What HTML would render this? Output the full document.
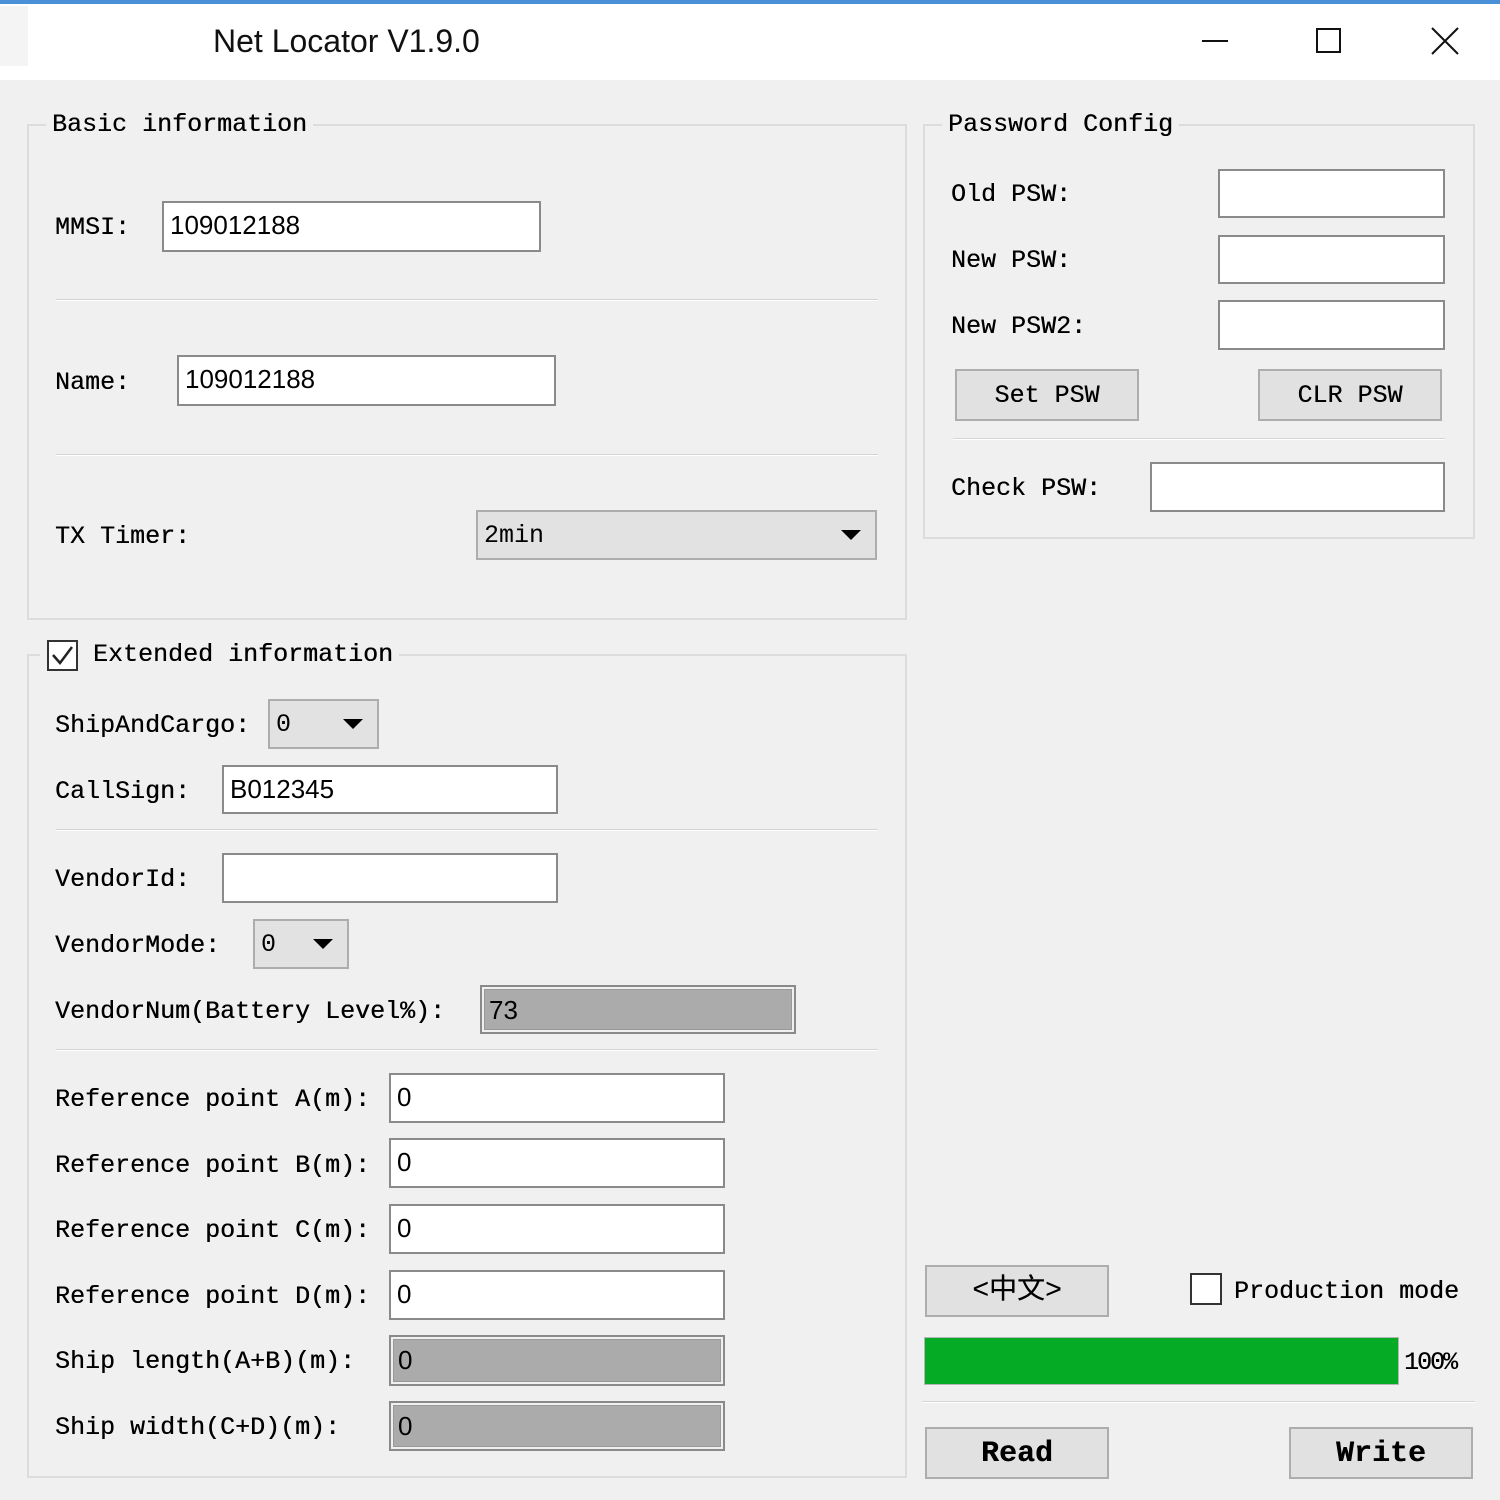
<!DOCTYPE html>
<html><head><meta charset="utf-8"><style>
*{margin:0;padding:0;box-sizing:border-box}
body{width:1500px;height:1500px;background:#f0f0f0;position:relative;overflow:hidden;font-family:"Liberation Mono","Noto Sans CJK SC",monospace;font-size:25px;color:#000}
.a{position:absolute}
.t{position:absolute;line-height:30px;white-space:pre;text-shadow:0.3px 0 0 #000;margin-top:2px}
.grp{position:absolute;border:2px solid #dcdcdc}
.leg{position:absolute;background:#f0f0f0;padding:0 6px;line-height:30px;white-space:pre;text-shadow:0.3px 0 0 #000;margin-top:2px}
.sep{position:absolute;height:2px;background:#d4d4d4;border-bottom:1px solid #fff}
.in{position:absolute;background:#fff;border:2px solid #8a8a8a;font-family:"Liberation Sans",sans-serif;font-size:26px;line-height:44px;padding-left:6px}
.gr{background:#f0f0f0;padding:2px}
.gr span{display:block;background:#ababab;height:100%;line-height:40px;padding-left:4px;border:1px solid #999}
.cb{position:absolute;background:#e2e2e2;border:2px solid #adadad;line-height:48px;padding-left:6px}
.cb:after{content:"";position:absolute;right:14px;top:18px;border-left:10px solid transparent;border-right:10px solid transparent;border-top:10px solid #000}
.btn{position:absolute;background:#e1e1e1;border:2px solid #adadad;text-align:center;line-height:50px;text-shadow:0.3px 0 0 #000}
</style></head><body>
<div class="a" style="left:0;top:0;width:1500px;height:80px;background:#fff"></div>
<div class="a" style="left:0;top:0;width:1500px;height:4px;background:#4a90d9"></div>
<div class="a" style="left:0;top:6px;width:28px;height:60px;background:#f4f4f4"></div>
<div class="a" style="left:213px;top:22px;font-family:'Liberation Sans',sans-serif;font-size:32px;line-height:38px;color:#111">Net Locator V1.9.0</div>
<div class="a" style="left:1202px;top:40px;width:26px;height:2px;background:#111"></div>
<div class="a" style="left:1316px;top:28px;width:25px;height:25px;border:2px solid #111"></div>
<svg class="a" style="left:1430px;top:26px" width="30" height="30"><path d="M2 2L28 28M28 2L2 28" stroke="#111" stroke-width="2"/></svg>

<div class="grp" style="left:27px;top:124px;width:880px;height:496px"></div>
<div class="leg" style="left:46px;top:108px">Basic information</div>
<div class="t" style="left:55px;top:211px">MMSI:</div>
<div class="in" style="left:162px;top:201px;width:379px;height:51px">109012188</div>
<div class="sep" style="left:56px;top:299px;width:822px"></div>
<div class="t" style="left:55px;top:366px">Name:</div>
<div class="in" style="left:177px;top:355px;width:379px;height:51px">109012188</div>
<div class="sep" style="left:56px;top:454px;width:822px"></div>
<div class="t" style="left:55px;top:520px">TX Timer:</div>
<div class="cb" style="left:476px;top:510px;width:401px;height:50px">2min</div>

<div class="grp" style="left:923px;top:124px;width:552px;height:415px"></div>
<div class="leg" style="left:942px;top:108px">Password Config</div>
<div class="t" style="left:951px;top:178px">Old PSW:</div>
<div class="in" style="left:1218px;top:169px;width:227px;height:49px"></div>
<div class="t" style="left:951px;top:244px">New PSW:</div>
<div class="in" style="left:1218px;top:235px;width:227px;height:49px"></div>
<div class="t" style="left:951px;top:310px">New PSW2:</div>
<div class="in" style="left:1218px;top:300px;width:227px;height:50px"></div>
<div class="btn" style="left:955px;top:369px;width:184px;height:52px">Set PSW</div>
<div class="btn" style="left:1258px;top:369px;width:184px;height:52px">CLR PSW</div>
<div class="sep" style="left:953px;top:438px;width:492px"></div>
<div class="t" style="left:951px;top:472px">Check PSW:</div>
<div class="in" style="left:1150px;top:462px;width:295px;height:50px"></div>

<div class="grp" style="left:27px;top:654px;width:880px;height:824px"></div>
<div class="leg" style="left:40px;top:638px;padding-left:53px">Extended information</div>
<div class="a" style="left:47px;top:640px;width:31px;height:31px;border:2px solid #333;background:#fff"></div>
<svg class="a" style="left:49px;top:642px" width="27" height="27"><path d="M4 13L11 21L23 5" stroke="#222" stroke-width="2.5" fill="none"/></svg>
<div class="t" style="left:55px;top:709px">ShipAndCargo:</div>
<div class="cb" style="left:268px;top:699px;width:111px;height:50px">0</div>
<div class="t" style="left:55px;top:775px">CallSign:</div>
<div class="in" style="left:222px;top:765px;width:336px;height:49px">B012345</div>
<div class="sep" style="left:56px;top:829px;width:822px"></div>
<div class="t" style="left:55px;top:863px">VendorId:</div>
<div class="in" style="left:222px;top:853px;width:336px;height:50px"></div>
<div class="t" style="left:55px;top:929px">VendorMode:</div>
<div class="cb" style="left:253px;top:919px;width:96px;height:50px">0</div>
<div class="t" style="left:55px;top:995px">VendorNum(Battery Level%):</div>
<div class="in gr" style="left:480px;top:985px;width:316px;height:49px"><span>73</span></div>
<div class="sep" style="left:56px;top:1049px;width:822px"></div>
<div class="t" style="left:55px;top:1083px">Reference point A(m):</div>
<div class="in" style="left:389px;top:1073px;width:336px;height:50px">0</div>
<div class="t" style="left:55px;top:1149px">Reference point B(m):</div>
<div class="in" style="left:389px;top:1138px;width:336px;height:50px">0</div>
<div class="t" style="left:55px;top:1214px">Reference point C(m):</div>
<div class="in" style="left:389px;top:1204px;width:336px;height:50px">0</div>
<div class="t" style="left:55px;top:1280px">Reference point D(m):</div>
<div class="in" style="left:389px;top:1270px;width:336px;height:50px">0</div>
<div class="t" style="left:55px;top:1345px">Ship length(A+B)(m):</div>
<div class="in gr" style="left:389px;top:1335px;width:336px;height:51px"><span>0</span></div>
<div class="t" style="left:55px;top:1411px">Ship width(C+D)(m):</div>
<div class="in gr" style="left:389px;top:1401px;width:336px;height:50px"><span>0</span></div>

<div class="btn" style="left:925px;top:1265px;width:184px;height:52px;font-family:'Liberation Mono','Noto Sans CJK SC',monospace;font-size:28px">&lt;中文&gt;</div>
<div class="a" style="left:1190px;top:1273px;width:32px;height:32px;border:2px solid #333;background:#fff"></div>
<div class="t" style="left:1234px;top:1275px">Production mode</div>
<div class="a" style="left:924px;top:1337px;width:475px;height:48px;background:#06ab25;border:1px solid #b5b5b5"></div>
<div class="t" style="left:1404px;top:1346px;letter-spacing:-2px">100%</div>
<div class="sep" style="left:922px;top:1401px;width:553px"></div>
<div class="btn" style="left:925px;top:1427px;width:184px;height:52px;font-size:30px;font-weight:bold">Read</div>
<div class="btn" style="left:1289px;top:1427px;width:184px;height:52px;font-size:30px;font-weight:bold">Write</div>
</body></html>
